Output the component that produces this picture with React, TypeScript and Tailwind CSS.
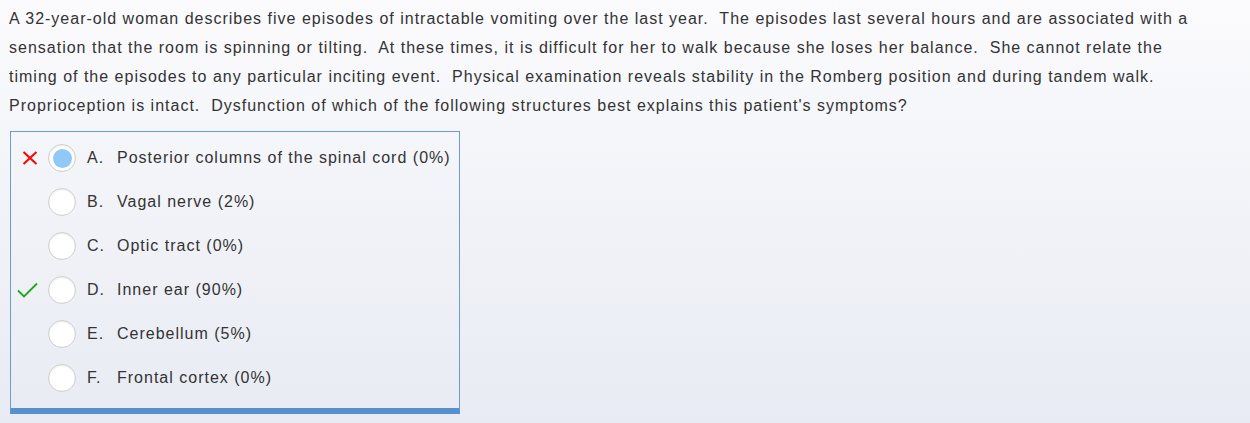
interface Choice {
letter: string;
text: string;
pct: number;
mark?: "wrong" | "right";
selected?: boolean;
}

const choices: Choice[] = [
{ letter: "A", text: "Posterior columns of the spinal cord", pct: 0, mark: "wrong", selected: true },
{ letter: "B", text: "Vagal nerve", pct: 2 },
{ letter: "C", text: "Optic tract", pct: 0 },
{ letter: "D", text: "Inner ear", pct: 90, mark: "right" },
{ letter: "E", text: "Cerebellum", pct: 5 },
{ letter: "F", text: "Frontal cortex", pct: 0 },
];

const lines = [
"A 32-year-old woman describes five episodes of intractable vomiting over the last year.\u00a0 The episodes last several hours and are associated with a",
"sensation that the room is spinning or tilting.\u00a0 At these times, it is difficult for her to walk because she loses her balance.\u00a0 She cannot relate the",
"timing of the episodes to any particular inciting event.\u00a0 Physical examination reveals stability in the Romberg position and during tandem walk.",
"Proprioception is intact.\u00a0 Dysfunction of which of the following structures best explains this patient's symptoms?",
];

function WrongMark() {
return (
<svg width="16" height="14" viewBox="0 0 16 14" className="text-[#ff0000]">
<path d="M1.5 1 L14.5 13 M14.5 1 L1.5 13" stroke="currentColor" strokeWidth="2" fill="none" />
</svg>
);
}

function RightMark() {
return (
<svg width="21" height="16" viewBox="0 0 21 16" className="text-[#1fa51f]">
<path d="M1 8.5 L7 14.5 L20 1.5" stroke="currentColor" strokeWidth="1.8" fill="none" />
</svg>
);
}

export default function App() {
return (
<div className="min-h-[423px] w-[1250px] bg-gradient-to-b from-[#fbfbfd] to-[#e8ebf3] font-['Liberation_Sans',Arial,sans-serif] text-[16px] tracking-[1px] text-[#333]">

<div className="pl-[9px] pt-[4px] leading-[29px]">
{lines.map((l, i) => (
<p key={i} className="whitespace-nowrap">{l}</p>
))}
</div>

<div className="ml-[10px] mt-[11px] w-[450px] border border-[#6f9ad3] border-b-[6px] border-b-[#578fcf] pt-[4px] pb-[8px]">
{choices.map(c => (
<div key={c.letter} className="flex h-[44px] items-center">
<div className="flex w-[37px] justify-end pr-[10px]">
{c.mark === "wrong" && <WrongMark />}
{c.mark === "right" && <RightMark />}
</div>
<div className="flex size-[28px] items-center justify-center rounded-full border-[1.5px] border-[#cfcfcf] bg-white shadow-[inset_0_1px_2px_rgba(0,0,0,0.08)]">
{c.selected && <div className="size-[19px] rounded-full bg-[#90c8f8]" />}
</div>
<span className="ml-[11px] w-[30px]">{c.letter}.</span>
<span>{c.text} ({c.pct}%)</span>
</div>
))}
</div>

</div>
);
}
